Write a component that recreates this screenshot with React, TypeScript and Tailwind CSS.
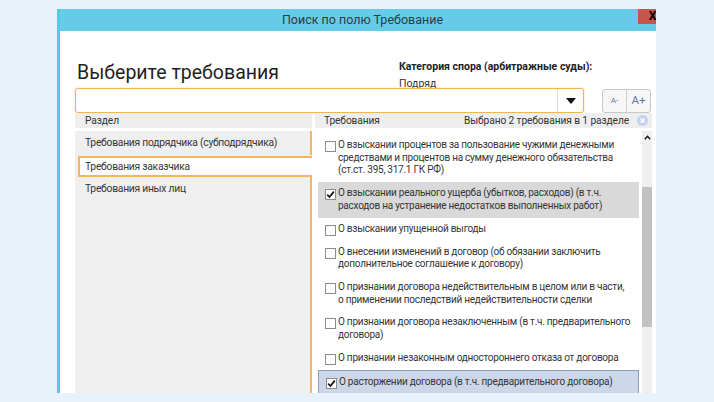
import React from 'react';

type Req = { lines: string[]; checked?: boolean; tone?: 'grey' | 'blue' };

const requirements: Req[] = [
  {
    lines: [
      'О взыскании процентов за пользование чужими денежными',
      'средствами и процентов на сумму денежного обязательства',
      '(ст.ст. 395, 317.1 ГК РФ)',
    ],
  },
  {
    lines: [
      'О взыскании реального ущерба (убытков, расходов) (в т.ч.',
      'расходов на устранение недостатков выполненных работ)',
    ],
    checked: true,
    tone: 'grey',
  },
  { lines: ['О взыскании упущенной выгоды'] },
  {
    lines: [
      'О внесении изменений в договор (об обязании заключить',
      'дополнительное соглашение к договору)',
    ],
  },
  {
    lines: [
      'О признании договора недействительным в целом или в части,',
      'о применении последствий недействительности сделки',
    ],
  },
  {
    lines: ['О признании договора незаключенным (в т.ч. предварительного', 'договора)'],
  },
  { lines: ['О признании незаконным одностороннего отказа от договора'] },
  {
    lines: ['О расторжении договора (в т.ч. предварительного договора)'],
    checked: true,
    tone: 'blue',
  },
];

const Checkbox = ({ checked }: { checked?: boolean }) => (
  <div className="mt-[2px] w-[11px] h-[11px] shrink-0 border border-[#8c8c8c] bg-white flex items-center justify-center">
    {checked && (
      <svg width="9" height="9" viewBox="0 0 9 9">
        <path d="M1.2 4.6 L3.5 7 L7.8 1.6" fill="none" stroke="#111" strokeWidth="1.7" />
      </svg>
    )}
  </div>
);

const RequirementRow = ({ item }: { item: Req }) => {
  const tone =
    item.tone === 'grey'
      ? 'bg-[#d9d9d9]'
      : item.tone === 'blue'
        ? 'bg-[#cbd6e9] border border-[#8f9dba]'
        : '';
  return (
    <div className={`flex gap-[2px] pl-[7px] py-[5px] ${tone}`}>
      <Checkbox checked={item.checked} />
      <div className="leading-[12.7px] whitespace-nowrap">
        {item.lines.map((l) => (
          <div key={l}>{l}</div>
        ))}
      </div>
    </div>
  );
};

export default function App() {
  return (
    <div className="w-[714px] h-[402px] bg-[#e8f2fb] pt-[9px] pl-[57px] overflow-hidden font-['Roboto','Noto_Sans',sans-serif] text-[#353535]">
      <div className="w-[599px] h-[384px] flex flex-col bg-white border-l-[3px] border-[#5cc6e8] overflow-hidden">
        {/* title bar */}
        <div className="h-[22px] shrink-0 bg-[#66cbe9] flex">
          <div className="flex-1 pl-[27px] text-center text-[12.5px] leading-[22px] text-[#2d3b45]">
            Поиск по полю Требование
          </div>
          <div className="w-[29px] h-[15px] mr-[-11px] shrink-0 bg-[#c5564b] text-black font-bold text-[12px] leading-[15px] text-center">
            X
          </div>
        </div>

        <div className="flex-1 flex flex-col pl-[15px] pr-[4px] pt-[27px] min-h-0">
          {/* heading row */}
          <div className="h-[30px] flex shrink-0">
            <div className="w-[324px] shrink-0 pl-[2px] text-[19.5px] leading-[30px] text-[#1f1f1f]">Выберите требования</div>
            <div className="text-[10.5px] leading-[17px]">
              <div className="font-bold text-[#222]">Категория спора (арбитражные суды):</div>
              <div>Подряд</div>
            </div>
          </div>

          {/* search row */}
          <div className="h-[25px] flex items-center shrink-0">
            <div className="w-[509px] h-[25px] shrink-0 flex border border-[#f2b35a] rounded-[3px] shadow-[0_0_2px_#f8cf90] bg-white">
              <div className="flex-1" />
              <div className="w-[26px] border-l border-[#dcdcdc] flex items-center justify-center">
                <svg width="10" height="6" viewBox="0 0 10 6">
                  <path d="M0 0 H10 L5 6 Z" fill="#111" />
                </svg>
              </div>
            </div>
            <div className="ml-[18px] w-[49px] h-[24px] shrink-0 flex border border-[#c9c9c9] rounded-[3px] bg-[#f6f6f6] text-[#5b7ba6]">
              <div className="flex-1 flex items-center justify-center text-[8px] border-r border-[#d2d2d2]">A-</div>
              <div className="flex-1 flex items-center justify-center text-[11.5px]">A+</div>
            </div>
          </div>

          {/* column headers */}
          <div className="h-[15px] flex shrink-0 text-[10.2px] tracking-[-0.1px] leading-[15px] text-[#333]">
            <div className="w-[237px] shrink-0 pl-[10px] bg-[#eeeeee]">Раздел</div>
            <div className="w-[3px] shrink-0" />
            <div className="flex-1 min-w-0 flex items-center pl-[9px] pr-[4px] bg-[#eeeeee] whitespace-nowrap">
              <span className="flex-1">Требования</span>
              <span>Выбрано 2 требования в 1 разделе</span>
              <span className="ml-[8px] w-[11px] h-[11px] shrink-0 rounded-full bg-[#c8d0f3] flex items-center justify-center">
                <svg width="5" height="5" viewBox="0 0 5 5">
                  <path d="M0.5 0.5 L4.5 4.5 M4.5 0.5 L0.5 4.5" stroke="#fff" strokeWidth="1.2" />
                </svg>
              </span>
            </div>
          </div>

          {/* body */}
          <div className="flex-1 flex mt-[3px] min-h-0 text-[10px] tracking-[-0.25px]">
            <div className="w-[237px] shrink-0 bg-[#efefef] flex flex-col whitespace-nowrap text-[10.3px]">
              <div className="h-[24px] pl-[10px] border-r-[2px] border-[#f4b55c] leading-[24px]">
                Требования подрядчика (субподрядчика)
              </div>
              <div className="h-[21px] mt-[1px] ml-[3px] pl-[5px] bg-white border-[2px] border-r-0 border-[#f4b55c] leading-[17px]">
                Требования заказчика
              </div>
              <div className="flex-1 pl-[10px] pt-[5px] border-r-[2px] border-[#f4b55c] leading-[14px]">
                Требования иных лиц
              </div>
            </div>

            <div className="flex-1 min-w-0 flex bg-white">
              <div className="flex-1 min-w-0 pl-[6px] pr-[3px] pt-[3px] flex flex-col overflow-hidden">
                {requirements.map((r, i) => (
                  <RequirementRow key={i} item={r} />
                ))}
              </div>
              <div className="w-[10px] shrink-0 bg-[#efefef] flex flex-col items-center">
                <svg className="mt-[4px]" width="7" height="5" viewBox="0 0 7 5">
                  <path d="M0.8 4.2 L3.5 1.2 L6.2 4.2" fill="none" stroke="#111" strokeWidth="1.4" />
                </svg>
                <div className="mt-[47px] w-full h-[140px] bg-[#c2c2c2]" />
              </div>
            </div>
          </div>
        </div>
      </div>
    </div>
  );
}
